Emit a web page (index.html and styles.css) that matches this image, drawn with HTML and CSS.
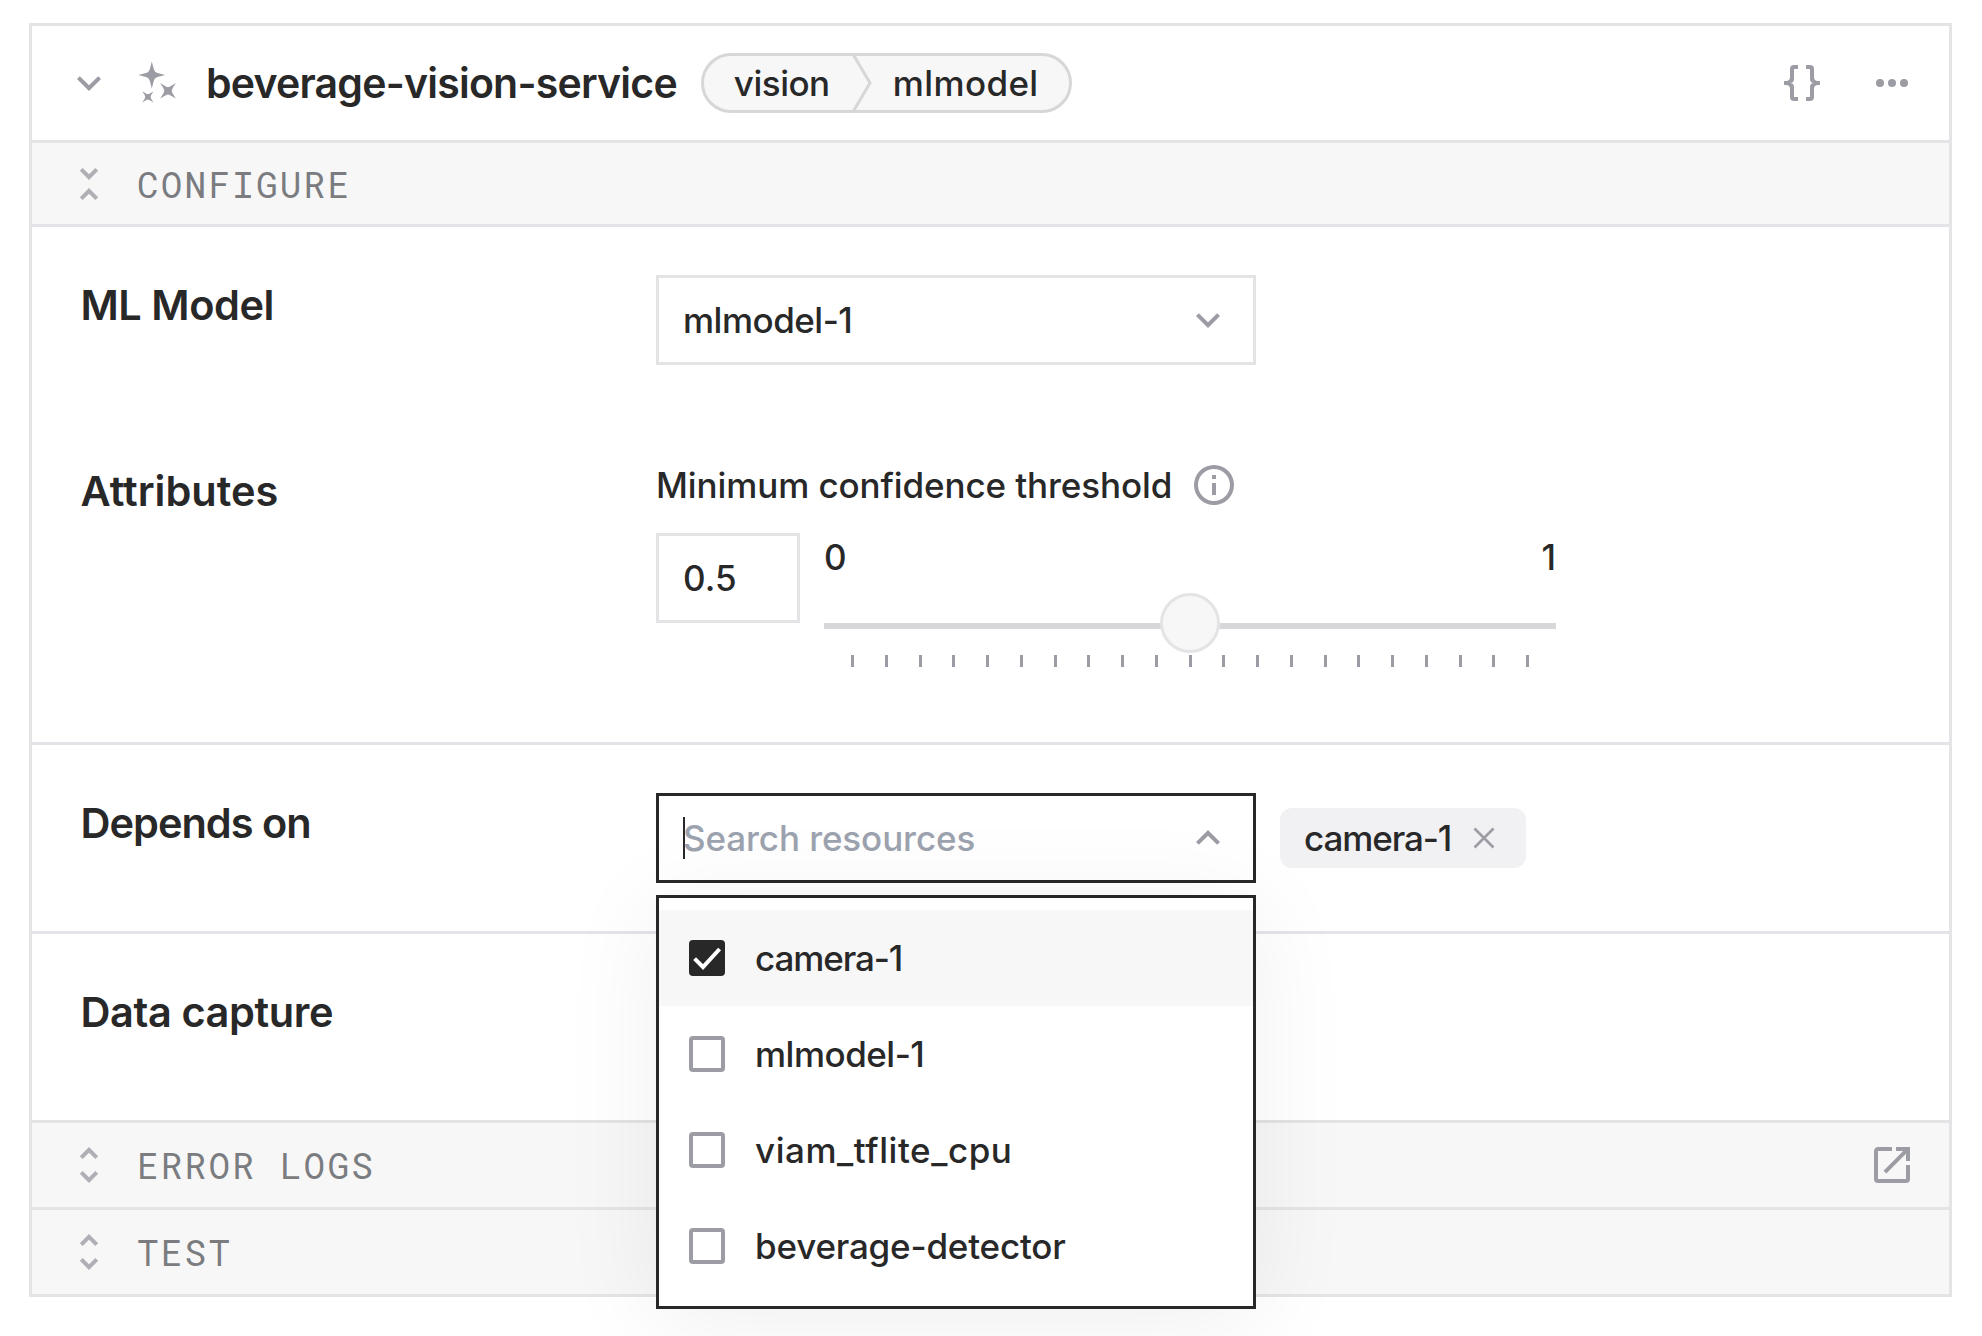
FILE: index.html
```
<!DOCTYPE html>
<html lang="en">
<head>
<meta charset="utf-8">
<title>beverage-vision-service</title>
<link rel="stylesheet" href="styles.css">
</head>
<body>
<main class="card">
  <header class="card-header">
    <svg class="icon" viewBox="0 0 24 24"><path d="M7.41 8.58 12 13.17l4.59-4.59L18 10l-6 6-6-6z"/></svg>
    <svg class="icon icon-service" viewBox="0 0 48 48"><path d="M18.8 2.6L20.8 10.2Q21.6 13.2 24.6 14L32.2 16L24.6 18Q21.6 18.8 20.8 21.8L18.8 29.4L16.8 21.8Q16 18.8 13 18L5.4 16L13 14Q16 13.2 16.8 10.2z"/><path d="M27.2 24L32.8 27.4Q35 28.6 37.2 27.4L42.8 24L39.4 29.6Q38.2 31.8 39.4 34L42.8 39.6L37.2 36.2Q35 35 32.8 36.2L27.2 39.6L30.6 34Q31.8 31.8 30.6 29.6z"/><path d="M9.3 32.3L13.3 34.8Q14.9 35.6 16.5 34.8L20.5 32.3L18 36.3Q17.2 37.9 18 39.5L20.5 43.5L16.5 41Q14.9 40.2 13.3 41L9.3 43.5L11.8 39.5Q12.6 37.9 11.8 36.3z"/></svg>
    <h1 class="title">beverage-vision-service</h1>
    <div class="type-pill">
      <span class="type-api">vision</span>
      <svg class="type-divider" viewBox="0 0 20 54"><path d="M1.5-1 18 27 1.5 55"/></svg>
      <span class="type-model">mlmodel</span>
    </div>
    <div class="header-actions">
      <svg class="icon" viewBox="0 0 24 24"><path d="M8 3A2 2 0 0 0 6 5V9A2 2 0 0 1 4 11H3V13H4A2 2 0 0 1 6 15V19A2 2 0 0 0 8 21H10V19H8V14A2 2 0 0 0 6 12A2 2 0 0 0 8 10V5H10V3M16 3A2 2 0 0 1 18 5V9A2 2 0 0 0 20 11H21V13H20A2 2 0 0 0 18 15V19A2 2 0 0 1 16 21H14V19H16V14A2 2 0 0 1 18 12A2 2 0 0 1 16 10V5H14V3z"/></svg>
      <svg class="icon" viewBox="0 0 24 24"><circle cx="6" cy="12" r="2"/><circle cx="12" cy="12" r="2"/><circle cx="18" cy="12" r="2"/></svg>
    </div>
  </header>

  <div class="bar bar-configure">
    <svg class="icon icon-soft" viewBox="0 0 24 24"><path d="M16.59 5.41 15.17 4 12 7.17 8.83 4 7.41 5.41 12 10M7.41 18.59 8.83 20 12 16.83 15.17 20 16.58 18.59 12 14z"/></svg>
    <span class="bar-label">CONFIGURE</span>
  </div>

  <section class="section section-config">
    <h2 class="label label-model">ML Model</h2>
    <div class="field select">
      <span class="select-value">mlmodel-1</span>
      <svg class="icon" viewBox="0 0 24 24"><path d="M7.41 8.58 12 13.17l4.59-4.59L18 10l-6 6-6-6z"/></svg>
    </div>

    <h2 class="label label-attributes">Attributes</h2>
    <div class="attributes">
      <div class="attribute-name">
        <span class="threshold-label">Minimum confidence threshold</span>
        <svg class="icon" viewBox="0 0 24 24"><path d="M11 9h2V7h-2m1 13c-4.41 0-8-3.59-8-8s3.59-8 8-8 8 3.59 8 8-3.59 8-8 8m0-18A10 10 0 0 0 2 12a10 10 0 0 0 10 10 10 10 0 0 0 10-10A10 10 0 0 0 12 2m-1 15h2v-6h-2z"/></svg>
      </div>
      <div class="threshold">
        <div class="field number">0.5</div>
        <div class="slider">
          <div class="slider-range"><span>0</span><span>1</span></div>
          <div class="slider-track"><div class="slider-thumb"></div></div>
          <div class="slider-ticks"><i></i><i></i><i></i><i></i><i></i><i></i><i></i><i></i><i></i><i></i><i></i><i></i><i></i><i></i><i></i><i></i><i></i><i></i><i></i><i></i><i></i></div>
        </div>
      </div>
    </div>
  </section>

  <section class="section">
    <h2 class="label label-depends">Depends on</h2>
    <div class="depends">
      <div class="combo">
        <div class="field select select-open">
          <div class="search"><span class="caret"></span><span class="placeholder">Search resources</span></div>
          <svg class="icon" viewBox="0 0 24 24"><path d="M7.41 15.41 12 10.83l4.59 4.58L18 14l-6-6-6 6z"/></svg>
        </div>
        <ul class="menu">
          <li class="option option-active">
            <svg class="check" viewBox="0 0 36 36"><rect width="36" height="36" rx="4"/><path d="M5.6 18.6 14 27l16.6-18"/></svg>
            <span class="text-camera">camera-1</span>
          </li>
          <li class="option"><span class="box"></span><span class="text-mlmodel">mlmodel-1</span></li>
          <li class="option"><span class="box"></span><span class="text-tflite">viam_tflite_cpu</span></li>
          <li class="option"><span class="box"></span><span class="text-detector">beverage-detector</span></li>
        </ul>
      </div>
      <div class="chip">
        <span class="text-camera">camera-1</span>
        <svg class="chip-close" viewBox="0 0 24 24"><path d="M2.5 2.5l19 19M21.5 2.5l-19 19"/></svg>
      </div>
    </div>
  </section>

  <section class="section">
    <h2 class="label label-capture">Data capture</h2>
  </section>

  <div class="bar">
    <svg class="icon icon-soft" viewBox="0 0 24 24"><path d="M12 18.17 8.83 15l-1.41 1.41L12 21l4.59-4.59L15.17 15M12 5.83 15.17 9l1.41-1.41L12 3 7.41 7.59 8.83 9z"/></svg>
    <span class="bar-label">ERROR LOGS</span>
    <svg class="icon bar-action" viewBox="0 0 24 24"><path d="M14 3v2h3.59l-9.83 9.83 1.41 1.41L19 6.41V10h2V3m-2 16H5V5h7V3H5c-1.11 0-2 .9-2 2v14a2 2 0 0 0 2 2h14a2 2 0 0 0 2-2v-7h-2z"/></svg>
  </div>
  <div class="bar">
    <svg class="icon icon-soft" viewBox="0 0 24 24"><path d="M12 18.17 8.83 15l-1.41 1.41L12 21l4.59-4.59L15.17 15M12 5.83 15.17 9l1.41-1.41L12 3 7.41 7.59 8.83 9z"/></svg>
    <span class="bar-label">TEST</span>
  </div>
</main>
</body>
</html>
```
FILE: styles.css
```
* { box-sizing: border-box; }

body {
  margin: 0;
  height: 1336px;
  overflow: hidden;
  padding: 23px 30px 0 29px;
  background: #fff;
  color: #282829;
  font: 450 35px/48px Inter, "Liberation Sans", sans-serif;
}

h1, h2, ul { margin: 0; padding: 0; }

.card { border: 3px solid #e4e4e6; }

.icon {
  flex: none;
  width: 48px;
  height: 48px;
  fill: #9c9ca4;
}
.icon-soft { fill: #afafb5; }

/* Header */
.card-header {
  display: flex;
  align-items: center;
  height: 114px;
  padding: 0 33px;
}
.icon-service { margin-left: 20px; }
.title {
  margin-left: 25px;
  font-size: 41px;
  font-weight: 620;
  letter-spacing: -0.78px;
  white-space: nowrap;
}
.type-pill {
  display: flex;
  align-items: center;
  width: 371px;
  height: 60px;
  margin-left: 24px;
  padding-left: 30px;
  border: 3px solid #d7d7d9;
  border-radius: 30px;
  background: #f7f7f8;
}
.type-api { width: 118px; letter-spacing: -0.5px; }
.type-divider {
  width: 20px;
  height: 54px;
  fill: none;
  stroke: #d7d7d9;
  stroke-width: 3;
}
.type-model { margin-left: 21px; letter-spacing: 0.35px; }
.header-actions {
  display: flex;
  gap: 42px;
  margin-left: auto;
}

/* Collapsible bars */
.bar {
  display: flex;
  align-items: center;
  height: 87px;
  padding: 0 33px;
  border-top: 3px solid #e4e4e6;
  background: #f7f7f8;
}
.bar-configure { height: 84px; }
.bar-label {
  margin-left: 24px;
  color: #7a7c80;
  font: 430 36px/48px "Roboto Mono", "Noto Sans Mono", monospace;
  letter-spacing: 2.2px;
}
.bar-configure .bar-label { padding-top: 1px; }
.bar-action { margin-left: auto; }

/* Sections */
.section {
  display: grid;
  grid-template-columns: 576px 1fr;
  align-items: start;
  min-height: 189px;
  padding: 48px;
  border-top: 3px solid #e4e4e8;
}
.section-config {
  row-gap: 96px;
  padding-bottom: 75px;
}
.label {
  padding-left: 0.5px;
  font-size: 41.5px;
  font-weight: 560;
  line-height: 60px;
}
.label-model { letter-spacing: -0.45px; }
.label-attributes { letter-spacing: 0; }
.label-depends { letter-spacing: -1px; }
.label-capture { letter-spacing: -0.4px; }

.field {
  display: flex;
  align-items: center;
  height: 90px;
  padding-left: 24px;
  border: 3px solid #e4e4e6;
}
.select {
  justify-content: space-between;
  width: 600px;
  padding-right: 21px;
}
.select-open { border-color: #282829; }
.select-value, .text-mlmodel { letter-spacing: -0.5px; }

.attribute-name {
  display: flex;
  gap: 18px;
}
.threshold-label { letter-spacing: -0.1px; }
.threshold {
  display: flex;
  gap: 24px;
  margin-top: 24px;
}
.number { width: 144px; letter-spacing: 0.1px; }
.slider { width: 732px; }
.slider-range {
  display: flex;
  justify-content: space-between;
}
.slider-track {
  position: relative;
  height: 6px;
  margin-top: 42px;
  background: #d7d7d9;
}
.slider-thumb {
  position: absolute;
  top: -30px;
  left: 336px;
  width: 60px;
  height: 60px;
  border: 3px solid #e4e4e6;
  border-radius: 50%;
  background: #f7f7f8;
}
.slider-ticks {
  display: flex;
  justify-content: space-between;
  margin-top: 26px;
  padding: 0 27px;
}
.slider-ticks i {
  width: 3px;
  height: 12px;
  background: #9c9ca4;
}

/* Dependencies */
.depends {
  display: flex;
  align-items: center;
  gap: 24px;
}
.combo { position: relative; }
.search { display: flex; align-items: center; }
.caret {
  width: 2px;
  height: 42px;
  background: #282829;
}
.placeholder {
  margin-left: -2px;
  color: #9ca3af;
  letter-spacing: -0.1px;
}
.menu {
  position: absolute;
  top: 102px;
  left: 0;
  width: 600px;
  padding: 12px 0;
  border: 3px solid #282829;
  background: #fff;
  box-shadow: 0 12px 96px rgba(0, 0, 0, 0.065);
  list-style: none;
}
.option {
  display: flex;
  align-items: center;
  gap: 30px;
  height: 96px;
  padding-left: 30px;
}
.option-active { background: #f7f7f8; }
.check { width: 36px; height: 36px; fill: #282829; }
.check path { fill: none; stroke: #fff; stroke-width: 4; }
.box {
  width: 36px;
  height: 36px;
  border: 4px solid #9c9ca4;
  border-radius: 4px;
}
.text-camera { letter-spacing: -1.1px; }
.text-tflite { letter-spacing: 0.55px; }
.text-detector { letter-spacing: -0.2px; }

.chip {
  display: flex;
  align-items: center;
  justify-content: space-between;
  width: 246px;
  height: 60px;
  padding: 0 30px 0 24px;
  border-radius: 12px;
  background: #f1f1f4;
}
.chip-close {
  width: 24px;
  height: 24px;
  fill: none;
  stroke: #9c9ca4;
  stroke-width: 2.6;
}
```
